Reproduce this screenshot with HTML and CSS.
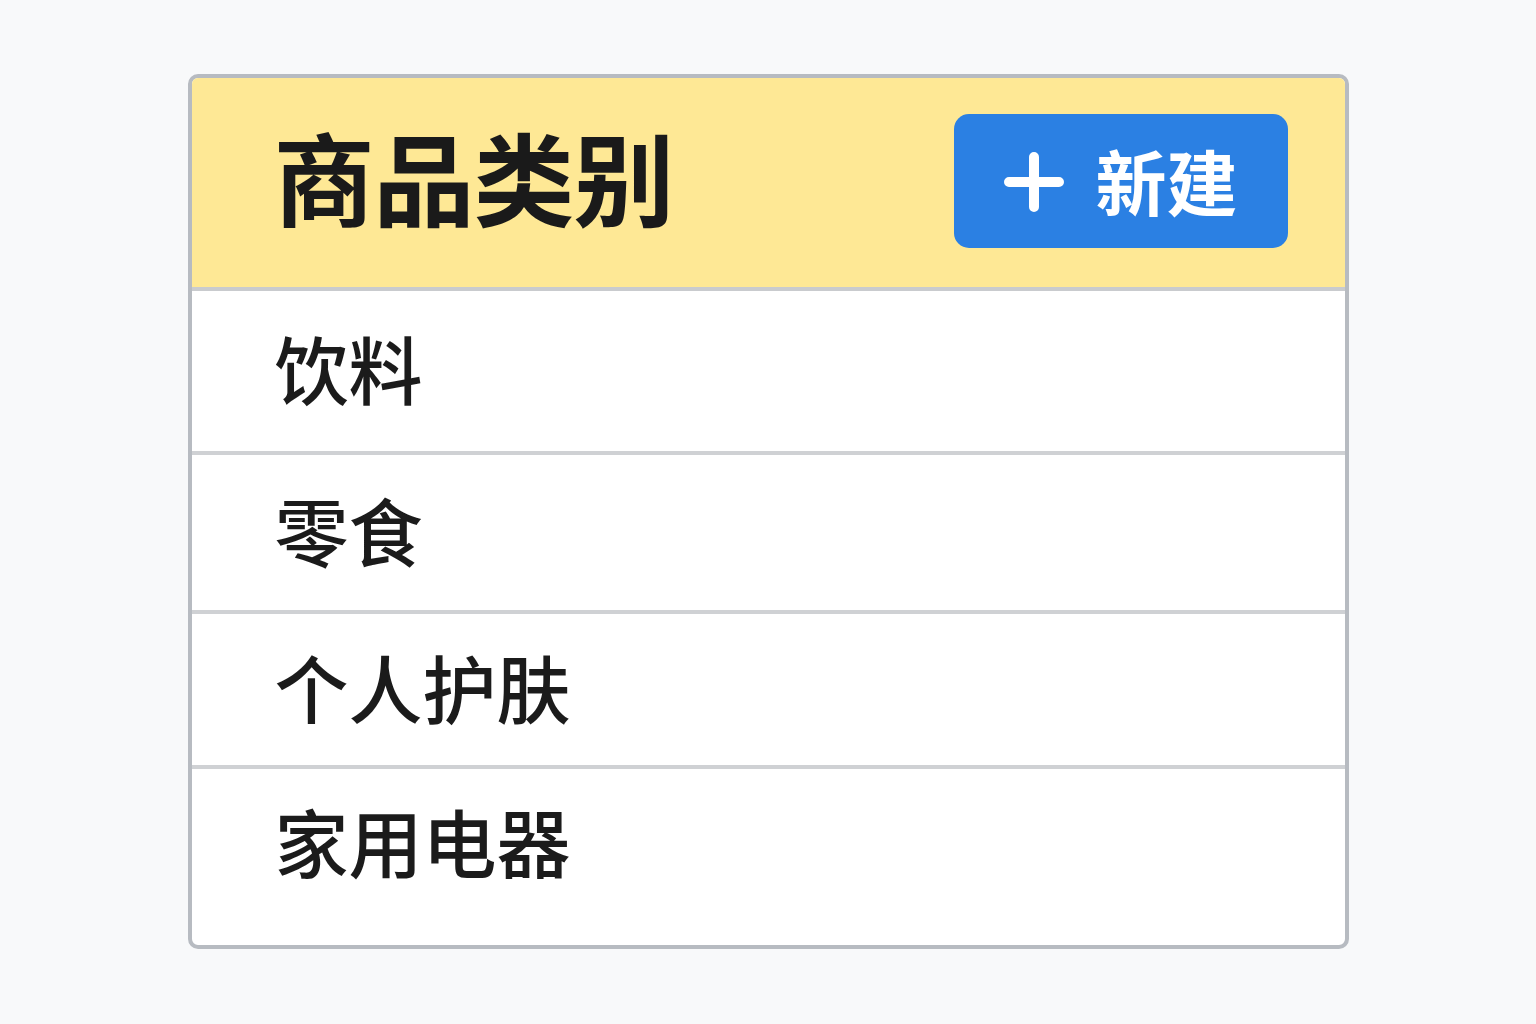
FILE: index.html
```html
<!DOCTYPE html>
<html lang="zh-CN">
<head>
<meta charset="utf-8">
<title>商品类别</title>
<link rel="stylesheet" href="styles.css">
</head>
<body>
<div class="page">
  <section class="card">
    <header class="card-header">
      <h1 class="title">商品类别</h1>
      <button class="btn-new" type="button">
        <svg class="plus" viewBox="0 0 60 62" width="60" height="62" aria-hidden="true">
          <path d="M30 6 V56 M5 31 H55" stroke="#ffffff" stroke-width="10" stroke-linecap="round" fill="none"/>
        </svg>
        <span class="btn-label">新建</span>
      </button>
    </header>
    <ul class="list">
      <li class="row">饮料</li>
      <li class="row">零食</li>
      <li class="row">个人护肤</li>
      <li class="row">家用电器</li>
    </ul>
  </section>
</div>
</body>
</html>
```
FILE: styles.css
```css
* { box-sizing: border-box; }
html, body {
  margin: 0;
  padding: 0;
  background: #f8f9fa;
}
body {
  font-family: "Noto Sans CJK SC", "Noto Sans", sans-serif;
  color: #1b1b1b;
}
.page {
  width: 1536px;
  height: 1024px;
  display: flex;
  justify-content: center;
  padding-top: 74px;
}
.card {
  width: 1161px;
  height: 875px;
  border: 4px solid #b7bbc1;
  border-radius: 10px;
  background: #ffffff;
  overflow: hidden;
  display: flex;
  flex-direction: column;
}
.card-header {
  height: 213px;
  flex: none;
  background: #fee895;
  border-bottom: 4px solid #c9cbce;
  display: flex;
  align-items: center;
  justify-content: space-between;
  padding: 0 57px 4px 82px;
}
.title {
  margin: 0 0 10px 0;
  font-size: 101px;
  font-weight: 700;
  line-height: 1;
  color: #1a1a1a;
  letter-spacing: -1px;
}
.btn-new {
  width: 334px;
  height: 134px;
  border: none;
  border-radius: 15px;
  background: #2b80e3;
  color: #ffffff;
  display: flex;
  align-items: center;
  padding: 0 0 0 50px;
  gap: 32px;
  font-family: inherit;
  cursor: pointer;
}
.plus {
  display: block;
  flex: none;
  margin-top: 2px;
}
.btn-label {
  font-size: 71px;
  font-weight: 700;
  line-height: 1;
  margin-top: -2px;
}
.list {
  list-style: none;
  margin: 0;
  padding: 0;
  flex: 1;
}
.row {
  height: 164px;
  display: flex;
  align-items: center;
  padding: 0 0 8px 83px;
  font-size: 74px;
  font-weight: 500;
  line-height: 1;
  border-bottom: 4px solid #cfd1d4;
}
.row:nth-child(2) { height: 159px; }
.row:nth-child(3) { height: 155px; }
.row:last-child {
  border-bottom: none;
  height: 150px;
}
```
